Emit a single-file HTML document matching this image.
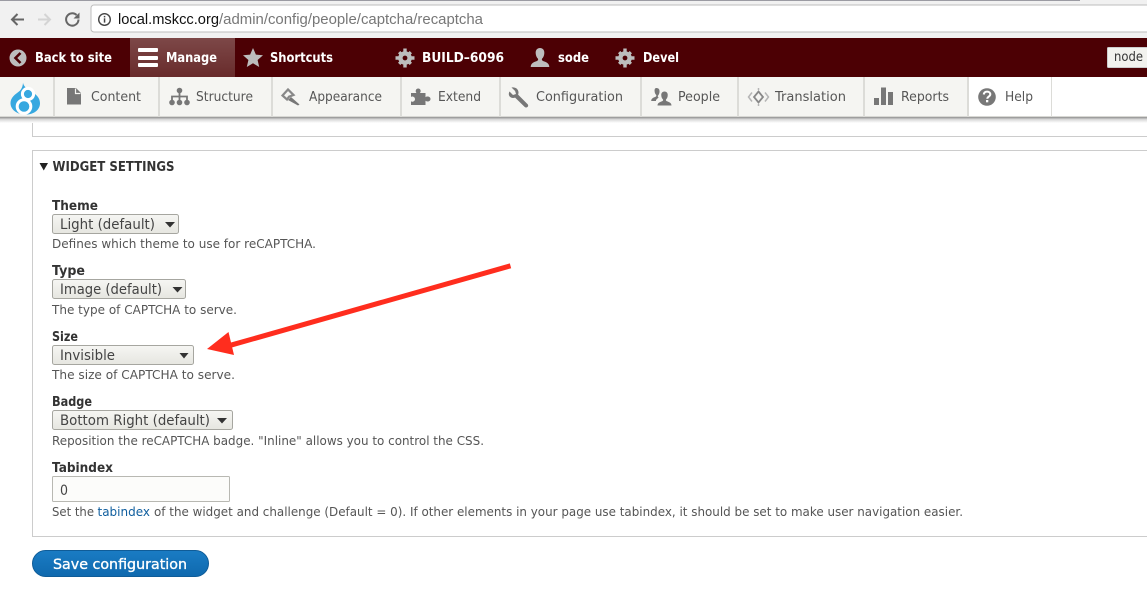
<!DOCTYPE html>
<html lang="en">
<head>
<meta charset="utf-8">
<title>reCAPTCHA settings</title>
<style>
html,body{margin:0;padding:0;width:1147px;height:595px;overflow:hidden;background:#fff}
svg{display:block}
text{font-family:"DejaVu Sans","Liberation Sans",sans-serif;white-space:pre}
.tb{fill:#fff;font-weight:700;font-size:13.5px}
.tr{fill:#565656;font-size:13.5px}
.lb{fill:#333;font-weight:700;font-size:13px}
.ds{fill:#555;font-size:12.6px}
.sl{fill:#444;font-size:14.5px}
.ic{fill:#777}
.ti{fill:#bdbdbd}
</style>
</head>
<body>
<svg width="1147" height="595" viewBox="0 0 1147 595" xmlns="http://www.w3.org/2000/svg">
<defs>
<linearGradient id="mg" x1="0" y1="0" x2="0" y2="1"><stop offset="0" stop-color="#7d4848"/><stop offset="1" stop-color="#682b2b"/></linearGradient>
<linearGradient id="sg" x1="0" y1="0" x2="0" y2="1"><stop offset="0" stop-color="#f6f6f3"/><stop offset="1" stop-color="#e6e6e0"/></linearGradient>
<linearGradient id="bg" x1="0" y1="0" x2="0" y2="1"><stop offset="0" stop-color="#1a7cc4"/><stop offset="1" stop-color="#0f69ae"/></linearGradient>
<linearGradient id="sh" x1="0" y1="0" x2="0" y2="1"><stop offset="0" stop-color="#8f8f8f"/><stop offset=".4" stop-color="#d8d8d8"/><stop offset="1" stop-color="#fff"/></linearGradient>
</defs>

<!-- browser chrome -->
<rect width="1147" height="38" fill="#f1f1f1"/>
<rect width="1080" height="1" fill="#9b9ba3"/>
<rect x="91" y="5" width="1060" height="27" rx="3" fill="#fff" stroke="#bdbdbd"/>
<path d="M24 19.500H12M17.500 14l-5.500 5.500 5.500 5.500" fill="none" stroke="#666" stroke-width="2"/>
<path d="M38 19.500H50M44.500 14l5.500 5.500-5.500 5.500" fill="none" stroke="#d4d4d4" stroke-width="2"/>
<path d="M78.500 19.500a6.200 6.200 0 1 1-1.900-4.500" fill="none" stroke="#666" stroke-width="2"/>
<path d="M79.500 12.500v6h-6z" fill="#666"/>
<circle cx="104.500" cy="19.500" r="5.800" fill="none" stroke="#444" stroke-width="1.400"/>
<rect x="103.800" y="18.300" width="1.500" height="4.300" fill="#444"/><rect x="103.800" y="15.900" width="1.500" height="1.500" fill="#444"/>
<text x="118" y="24" font-size="14.500" fill="#111" style="font-family:'Liberation Sans',sans-serif" textLength="101" lengthAdjust="spacingAndGlyphs">local.mskcc.org</text>
<text x="219" y="24" font-size="14.500" fill="#777" style="font-family:'Liberation Sans',sans-serif" textLength="264" lengthAdjust="spacingAndGlyphs">/admin/config/people/captcha/recaptcha</text>

<!-- admin toolbar -->
<rect y="38" width="1147" height="39" fill="#4c0004"/>
<rect x="130" y="38" width="105" height="39" fill="url(#mg)"/>
<circle cx="18" cy="58" r="8.500" class="ti"/>
<path d="M20.500 53l-5 5 5 5" fill="none" stroke="#4c0004" stroke-width="2.600"/>
<text x="35" y="62" class="tb" textLength="77" lengthAdjust="spacingAndGlyphs">Back to site</text>
<rect x="138" y="48" width="20" height="4" rx="1" fill="#fff"/><rect x="138" y="56" width="20" height="4" rx="1" fill="#fff"/><rect x="138" y="63" width="20" height="4" rx="1" fill="#fff"/>
<text x="166" y="62" class="tb" textLength="51" lengthAdjust="spacingAndGlyphs">Manage</text>
<path d="M253 48l2.900 6.600 7.100.700-5.400 4.700 1.600 7-6.200-3.700-6.200 3.700 1.600-7-5.400-4.700 7.100-.700z" class="ti"/>
<text x="270" y="62" class="tb" textLength="63" lengthAdjust="spacingAndGlyphs">Shortcuts</text>
<g id="gear"><circle cx="405" cy="58" r="4.600" fill="none" stroke="#bdbdbd" stroke-width="4.400"/>
<path d="M403.300 48.500h3.400v3.500h-3.400zM403.300 64h3.400v3.500h-3.400zM395.500 56.300h3.500v3.400h-3.500zM411 56.300h3.500v3.400h-3.500z" class="ti"/>
<path d="M398 53.300l2.300-2.300 2.300 2.300-2.300 2.300zM409.700 65l2.300-2.300-2.300-2.300-2.300 2.300zM398 62.700l2.300 2.300 2.300-2.300-2.300-2.300zM409.700 51l2.300 2.300-2.300 2.300-2.300-2.300z" class="ti"/></g>
<text x="422" y="62" class="tb" textLength="82" lengthAdjust="spacingAndGlyphs">BUILD–6096</text>
<path d="M540 48c3.200 0 4.600 2.500 4.300 5.500-.2 2.300-1 4-2.300 5.300-.4 1 0 1.800 1.300 2.300 2.800 1 6 2 6 5.900h-18.600c0-3.900 3.200-4.900 6-5.900 1.300-.5 1.700-1.300 1.300-2.300-1.300-1.300-2.100-3-2.300-5.300-.3-3 1.100-5.500 4.300-5.500z" class="ti"/>
<text x="558" y="62" class="tb" textLength="31" lengthAdjust="spacingAndGlyphs">sode</text>
<use href="#gear" x="220"/>
<text x="643" y="62" class="tb" textLength="36" lengthAdjust="spacingAndGlyphs">Devel</text>
<rect x="1107.500" y="47.500" width="60" height="20" rx="1" fill="#f2f2ee" stroke="#ccc"/>
<text x="1114" y="61" font-size="13" fill="#333" textLength="29" lengthAdjust="spacingAndGlyphs">node</text>

<!-- tray -->
<rect y="117" width="1147" height="6" fill="url(#sh)"/>
<rect y="77" width="1147" height="40" fill="#fff"/>
<rect y="77" width="968" height="40" fill="#f5f5f2"/>
<rect y="116" width="1147" height="1" fill="#d8d8d4"/>
<g fill="#dcdcd8">
<rect x="53" y="77" width="2" height="40"/><rect x="158" y="77" width="2" height="40"/><rect x="271" y="77" width="2" height="40"/><rect x="400" y="77" width="2" height="40"/><rect x="499" y="77" width="2" height="40"/><rect x="640" y="77" width="2" height="40"/><rect x="737" y="77" width="2" height="40"/><rect x="863" y="77" width="2" height="40"/><rect x="967" y="77" width="2" height="40"/><rect x="1051" y="77" width="1" height="40"/>
</g>

<!-- drupal logo -->
<path d="M23 82.500c.5 3.800 3.400 5.600 6.300 7.500 4.700 3 10.700 6.500 10.700 13.200 0 6.600-6.100 11.300-14.500 11.300S10.500 109.800 10.500 103c0-5.600 5-8.800 8.600-11.600 2.200-1.700 3.800-5 3.900-8.900z" fill="#37a8e0"/>
<circle cx="28" cy="94" r="5.600" fill="none" stroke="#fff" stroke-width="3"/>
<circle cx="24" cy="106.500" r="6.800" fill="none" stroke="#fff" stroke-width="3"/>

<!-- tray icons -->
<path d="M67 88h9l5 5v11.500H67z" class="ic"/><path d="M75.500 88.500v5h5" fill="none" stroke="#f5f5f2" stroke-width="1.200"/>
<text x="91" y="101" class="tr" textLength="50" lengthAdjust="spacingAndGlyphs">Content</text>

<g class="ic"><circle cx="179.500" cy="90.500" r="2.800"/><circle cx="172" cy="102.500" r="2.800"/><circle cx="179.500" cy="102.500" r="2.800"/><circle cx="187" cy="102.500" r="2.800"/></g>
<path d="M179.500 91v11M172 102v-5.500h15v5.500" fill="none" stroke="#777" stroke-width="1.800"/>
<text x="196" y="101" class="tr" textLength="57" lengthAdjust="spacingAndGlyphs">Structure</text>

<path d="M282.500 95.500l5.500-6 5.500 5.500-4.500 1.700-2 2.800z" fill="none" stroke="#888" stroke-width="2.200"/>
<path d="M288 100l3-3 8.500 7.500-1.500 1z" class="ic"/>
<text x="309" y="101" class="tr" textLength="73" lengthAdjust="spacingAndGlyphs">Appearance</text>

<path d="M411 93h5.500c-1.500-1.500-.8-4.500 1.700-4.500s3.200 3 1.700 4.500h5.600v4.200c1.500-1.300 5-.8 5 1.800s-3.500 3.100-5 1.800v4.200H411v-3.700c1.800 1.200 4-.3 4-2.200s-2.200-3.400-4-2.200z" class="ic"/>
<text x="438" y="101" class="tr" textLength="43" lengthAdjust="spacingAndGlyphs">Extend</text>

<path d="M509.500 91.500l3.500 3.500 3-1-.9-3-3.600-3.500c3.500-.8 6.700 1.200 7 4.600 0 1-.1 1.700-.4 2.500l9.300 9.400c1 1 1 2.100.2 2.900-.9.800-2 .9-3 0l-9.500-9.300c-4.500 1.500-7.800-2-5.600-6.100z" class="ic"/>
<text x="536" y="101" class="tr" textLength="87" lengthAdjust="spacingAndGlyphs">Configuration</text>

<path d="M656.500 88c2.300 0 3.300 1.800 3 4-.1 1.600-.8 2.800-1.600 3.700-.2.800 0 1.200.8 1.600l-2.700 2.700v1h-4.800c0-3 2.600-3.500 4.400-4.300.7-.4.900-.8.600-1.700-.9-.9-1.500-2.200-1.600-3.800-.2-2.200.5-3.200 1.900-3.200z" class="ic"/>
<path d="M664.500 91.500c2.400 0 3.500 1.900 3.200 4.100-.1 1.700-.8 3-1.700 3.900-.3.800 0 1.300.9 1.700 2 .8 4.600 1.500 4.600 4.300h-14c0-2.800 2.600-3.500 4.600-4.300.9-.4 1.200-.9.900-1.700-.9-.9-1.600-2.200-1.700-3.900-.3-2.200.8-4.100 3.200-4.100z" class="ic"/>
<text x="678" y="101" class="tr" textLength="42" lengthAdjust="spacingAndGlyphs">People</text>

<path d="M758.500 91.500l4.500 5.500-4.500 5.500-4.500-5.500z" fill="none" stroke="#888" stroke-width="1.800"/>
<path d="M752 92.500l-3.500 4.500 3.500 4.500M765 92.500l3.500 4.500-3.500 4.500M758.500 88v2M758.500 104v2" fill="none" stroke="#b5b5b5" stroke-width="1.500"/>
<text x="775" y="101" class="tr" textLength="71" lengthAdjust="spacingAndGlyphs">Translation</text>

<rect x="874" y="98" width="5" height="7" class="ic"/><rect x="881" y="87.500" width="5" height="17.500" class="ic"/><rect x="888" y="92" width="5" height="13" class="ic"/>
<text x="901" y="101" class="tr" textLength="48" lengthAdjust="spacingAndGlyphs">Reports</text>

<circle cx="987" cy="97" r="8.800" fill="#787878"/>
<path d="M983.800 94.500c.2-2 1.500-2.900 3.300-2.900 1.900 0 3.200 1.100 3.200 2.700 0 2.300-3 2.300-3 4.500" fill="none" stroke="#fff" stroke-width="2"/>
<rect x="986" y="100" width="2.300" height="2.300" fill="#fff"/>
<text x="1005" y="101" class="tr" textLength="28" lengthAdjust="spacingAndGlyphs">Help</text>

<!-- fieldsets -->
<path d="M32.500 123V136.500H1147" fill="none" stroke="#ccc"/>
<path d="M1147 150.500H32.500V536.500H1147" fill="none" stroke="#ccc"/>
<path d="M39.500 163h8.500l-4.250 7.500z" fill="#222"/>
<text x="52.500" y="171" font-size="13" font-weight="700" fill="#333" textLength="122" lengthAdjust="spacingAndGlyphs">WIDGET SETTINGS</text>

<!-- Theme -->
<text x="52" y="210" class="lb" textLength="46" lengthAdjust="spacingAndGlyphs">Theme</text>
<rect x="52.500" y="214.500" width="126" height="19" rx="2" fill="url(#sg)" stroke="#a6a6a0"/>
<text x="60" y="229" class="sl" textLength="95" lengthAdjust="spacingAndGlyphs">Light (default)</text>
<path d="M165 222h10l-5 5.500z" fill="#333"/>
<text x="52" y="248" class="ds" textLength="264" lengthAdjust="spacingAndGlyphs">Defines which theme to use for reCAPTCHA.</text>

<!-- Type -->
<text x="52" y="275" class="lb" textLength="33" lengthAdjust="spacingAndGlyphs">Type</text>
<rect x="52.500" y="279.500" width="133" height="19" rx="2" fill="url(#sg)" stroke="#a6a6a0"/>
<text x="60" y="294" class="sl" textLength="102" lengthAdjust="spacingAndGlyphs">Image (default)</text>
<path d="M172.500 287h10l-5 5.500z" fill="#333"/>
<text x="52" y="314" class="ds" textLength="185" lengthAdjust="spacingAndGlyphs">The type of CAPTCHA to serve.</text>

<!-- Size -->
<text x="52" y="341" class="lb" textLength="26" lengthAdjust="spacingAndGlyphs">Size</text>
<rect x="52.500" y="345.500" width="141" height="19" rx="2" fill="url(#sg)" stroke="#a6a6a0"/>
<text x="60" y="360" class="sl" textLength="55" lengthAdjust="spacingAndGlyphs">Invisible</text>
<path d="M179.500 353h9l-4.500 5.500z" fill="#333"/>
<text x="52" y="379" class="ds" textLength="183" lengthAdjust="spacingAndGlyphs">The size of CAPTCHA to serve.</text>

<!-- Badge -->
<text x="52" y="406" class="lb" textLength="40" lengthAdjust="spacingAndGlyphs">Badge</text>
<rect x="52.500" y="410.500" width="180" height="19" rx="2" fill="url(#sg)" stroke="#a6a6a0"/>
<text x="60" y="425" class="sl" textLength="150" lengthAdjust="spacingAndGlyphs">Bottom Right (default)</text>
<path d="M217 418h10l-5 5.500z" fill="#333"/>
<text x="52" y="445" class="ds" textLength="432" lengthAdjust="spacingAndGlyphs">Reposition the reCAPTCHA badge. "Inline" allows you to control the CSS.</text>

<!-- Tabindex -->
<text x="52" y="472" class="lb" textLength="61" lengthAdjust="spacingAndGlyphs">Tabindex</text>
<rect x="52.500" y="476.500" width="177" height="25" rx="1" fill="#fcfcfa" stroke="#b8b8b2"/>
<text x="60" y="495" class="sl" textLength="8" lengthAdjust="spacingAndGlyphs">0</text>
<text x="52" y="516" class="ds" textLength="42" lengthAdjust="spacingAndGlyphs">Set the</text>
<text x="97.500" y="516" font-size="12.600" fill="#0f5e9e" textLength="52.500" lengthAdjust="spacingAndGlyphs">tabindex</text>
<text x="154" y="516" class="ds" textLength="809" lengthAdjust="spacingAndGlyphs">of the widget and challenge (Default = 0). If other elements in your page use tabindex, it should be set to make user navigation easier.</text>

<!-- Save -->
<rect x="32.500" y="550.500" width="176" height="26" rx="13" fill="url(#bg)" stroke="#0f5c98"/>
<text x="53" y="569" font-size="14.500" fill="#fff" stroke="#fff" stroke-width=".35" textLength="134" lengthAdjust="spacingAndGlyphs">Save configuration</text>

<!-- annotation arrow -->
<path d="M510.500 265.800L229 345.700" stroke="#ff2d1e" stroke-width="5" fill="none"/>
<path d="M207 349l21.500-17 5.500 23z" fill="#ff2d1e"/>
</svg>
</body>
</html>
